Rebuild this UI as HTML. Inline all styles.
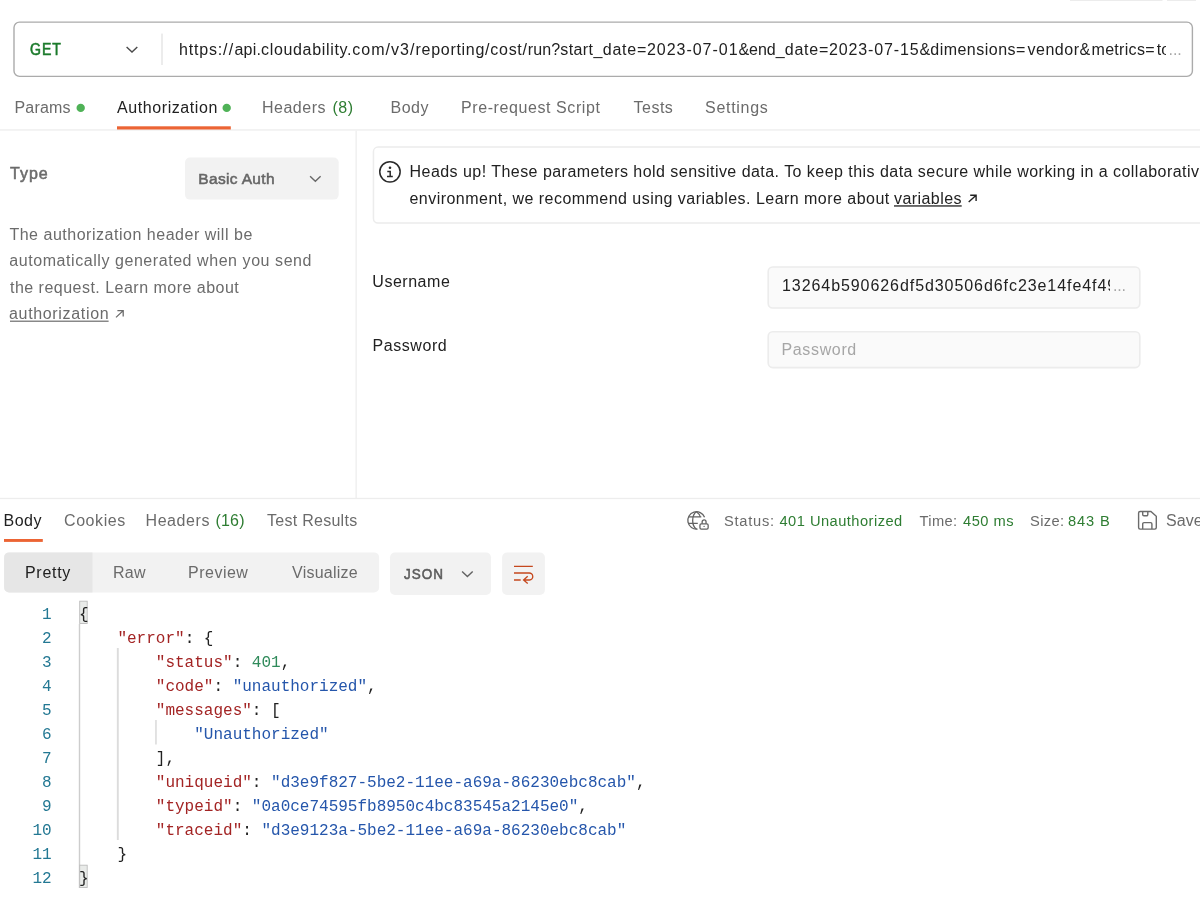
<!DOCTYPE html>
<html><head><meta charset="utf-8"><title>Postman</title>
<style>
html,body{margin:0;padding:0;background:#fff;}
body{will-change:transform;width:1200px;height:909px;position:relative;overflow:hidden;font-family:"Liberation Sans",sans-serif;}
.t{position:absolute;white-space:pre;line-height:24px;font-family:"Liberation Sans",sans-serif;}
.b{position:absolute;box-sizing:border-box;}
.code{position:absolute;left:-1px;top:603px;font-family:"Liberation Mono",monospace;font-size:16px;line-height:24px;white-space:pre;color:#212121;}
.ln{position:absolute;left:0;width:52.6px;text-align:right;color:#237893;}
.cl{position:absolute;left:80px;}
.k{color:#a32424}.s{color:#2556ab}.n{color:#2f8a5a}
svg{position:absolute;overflow:visible}
</style></head><body>
<svg width="1200" height="909" viewBox="0 0 1200 909" style="left:0;top:0">
<!-- top faint bits -->
<rect x="1070" y="0" width="92.5" height="0.8" fill="#e8e8e8"/>
<rect x="1167" y="0" width="29" height="0.8" fill="#e8e8e8"/>
<!-- url bar -->
<rect x="14" y="22.1" width="1178.4" height="54.3" rx="5.5" fill="#fff" stroke="#ababab" stroke-width="1.4"/>
<rect x="161" y="33.6" width="2" height="31.4" fill="#ececec"/>
<path d="M126.6 46.9 L132 52 L137.3 46.9" fill="none" stroke="#4a4a4a" stroke-width="1.4"/>
<!-- tabs -->
<rect x="0" y="129.2" width="1200" height="1.5" fill="#efefef"/>
<rect x="117" y="126.3" width="113.8" height="3.2" fill="#ec6434"/>
<circle cx="80.7" cy="107.9" r="4.2" fill="#4fb257"/>
<circle cx="226.7" cy="107.9" r="4.2" fill="#4fb257"/>
<rect x="355.4" y="130.5" width="1.5" height="367.5" fill="#f0f0f0"/>
<!-- auth type -->
<rect x="185" y="157.6" width="153.7" height="42" rx="5" fill="#f2f2f2"/>
<path d="M310.1 176.2 L315.35 181.2 L320.6 176.2" fill="none" stroke="#686868" stroke-width="1.4"/>
<path d="M117.4 310.6 H123.2 V316.4 M123.2 310.6 L116 317.4" fill="none" stroke="#6b6b6b" stroke-width="1.3"/>
<rect x="10" y="320.6" width="98.6" height="1.2" fill="#6b6b6b"/>
<!-- info box -->
<rect x="373.45" y="147.1" width="840" height="76" rx="4.5" fill="#fff" stroke="#ececec" stroke-width="1.5"/>
<g fill="none" stroke="#2a2a2a" stroke-width="1.5"><circle cx="389.95" cy="171.85" r="10.2"/><path d="M387.3 171.6 H390.2 V176.5 M387 176.5 H392.8"/></g>
<circle cx="390" cy="167.8" r="1.3" fill="#2a2a2a"/>
<path d="M970.2 195.3 H976.1 V201 M976.1 195.3 L968.7 202" fill="none" stroke="#212121" stroke-width="1.4"/>
<rect x="894" y="205.3" width="67.7" height="1.3" fill="#212121"/>
<!-- inputs -->
<rect x="768.2" y="267.05" width="371.6" height="40.95" rx="4.5" fill="#fafafa" stroke="#ececec" stroke-width="1.6"/>
<rect x="768.2" y="331.75" width="371.6" height="35.85" rx="4.5" fill="#fafafa" stroke="#ececec" stroke-width="1.6"/>
<!-- response divider -->
<rect x="0" y="497.8" width="1200" height="1.3" fill="#ededed"/>
<rect x="4" y="539" width="38.8" height="2.9" fill="#ec6434"/>
<!-- view switch -->
<rect x="4.1" y="552.4" width="375" height="40" rx="5" fill="#f2f2f2"/>
<path d="M9.1 552.4 H92.5 V592.4 H9.1 A5 5 0 0 1 4.1 587.4 V557.4 A5 5 0 0 1 9.1 552.4 Z" fill="#e6e6e6"/>
<rect x="390" y="552.6" width="101" height="42.3" rx="5" fill="#f2f2f2"/>
<path d="M462.1 571.4 L467.4 576.5 L472.7 571.4" fill="none" stroke="#626262" stroke-width="1.4"/>
<rect x="502.1" y="552.6" width="42.8" height="42.4" rx="5" fill="#f2f2f2"/>
<path d="M514 566.35 H532.8 M514 573 H529 A3.5 3.5 0 0 1 529.5 580 H524 M527.7 576.2 L523.6 580 L527.7 583.6 M514 580 H520.7" fill="none" stroke="#c5481e" stroke-width="1.35"/>
<!-- status icons -->
<g fill="none" stroke="#636363" stroke-width="1.3"><path d="M704.57 517.14 A8.7 8.7 0 1 0 697.56 529.03"/><path d="M696.5 511.7 C691.4 515 691.4 526 696.5 529.1 M696.5 511.7 C698.7 513.2 700 515 700.4 517.3 M688.6 516.8 H701.3 M688.3 523.4 H697.8"/><rect x="699.95" y="523.85" width="8.2" height="5.3" rx="1.3"/><path d="M702.15 523.8 V521.8 A1.95 1.95 0 0 1 706.05 521.8 V523.8"/></g>
<circle cx="704.1" cy="526.4" r="0.7" fill="#6b6b6b"/>
<g fill="none" stroke="#6b6b6b" stroke-width="1.4"><path d="M1140.1 511.5 H1150.9 L1156.3 516.3 V527.6 A1.5 1.5 0 0 1 1154.8 529.1 H1140.1 A1.5 1.5 0 0 1 1138.6 527.6 V513 A1.5 1.5 0 0 1 1140.1 511.5 Z"/><path d="M1142.7 511.5 V514.6 A1.2 1.2 0 0 0 1143.9 515.8 H1146.6 A1.2 1.2 0 0 0 1147.8 514.6 V511.5 M1142.7 529.1 V523.9 A1.3 1.3 0 0 1 1144 522.6 H1150.6 A1.3 1.3 0 0 1 1151.9 523.9 V529.1"/></g>
<!-- code guides -->
<rect x="78.8" y="624" width="1.4" height="264" fill="#cdcdcd"/>
<rect x="116.85" y="648" width="1.9" height="192" fill="#dcdcdc"/>
<rect x="155.05" y="720" width="1.8" height="24.5" fill="#e0e0e0"/>
<rect x="79.7" y="601.2" width="7.5" height="22.3" fill="#e9ebe9" stroke="#bcbcbc" stroke-width="0.9"/>
<rect x="79.7" y="865.2" width="7.5" height="22.3" fill="#e9ebe9" stroke="#bcbcbc" stroke-width="0.9"/>
</svg>
<span class="t" style="left:30.00px;top:38.00px;font-size:16px;letter-spacing:1.114px;color:#1b7a2b;transform:scaleX(0.88);transform-origin:0 0;-webkit-text-stroke:0.6px #1b7a2b;">GET</span>
<span class="t" style="left:179.00px;top:38.00px;font-size:16px;letter-spacing:0.810px;color:#212121;">https:</span>
<span class="t" style="left:223.00px;top:38.00px;font-size:16px;letter-spacing:1.305px;color:#212121;">//</span>
<span class="t" style="left:234.50px;top:38.00px;font-size:16px;letter-spacing:0.176px;color:#212121;">api.</span>
<span class="t" style="left:261.00px;top:38.00px;font-size:16px;letter-spacing:0.675px;color:#212121;">cloudability.</span>
<span class="t" style="left:352.20px;top:38.00px;font-size:16px;letter-spacing:1.032px;color:#212121;">com/</span>
<span class="t" style="left:391.00px;top:38.00px;font-size:16px;letter-spacing:1.052px;color:#212121;">v3/</span>
<span class="t" style="left:415.50px;top:38.00px;font-size:16px;letter-spacing:0.716px;color:#212121;">reporting/</span>
<span class="t" style="left:490.25px;top:38.00px;font-size:16px;letter-spacing:0.741px;color:#212121;">cost/</span>
<span class="t" style="left:527.75px;top:38.00px;font-size:16px;letter-spacing:0.117px;color:#212121;">run?</span>
<span class="t" style="left:560.25px;top:38.00px;font-size:16px;letter-spacing:0.414px;color:#212121;">start_</span>
<span class="t" style="left:602.75px;top:38.00px;font-size:16px;letter-spacing:0.753px;color:#212121;">date=</span>
<span class="t" style="left:647.00px;top:38.00px;font-size:16px;letter-spacing:0.966px;color:#212121;">2023-07-01</span>
<span class="t" style="left:738.50px;top:38.00px;font-size:16px;letter-spacing:-0.172px;color:#212121;">&amp;</span>
<span class="t" style="left:749.00px;top:38.00px;font-size:16px;letter-spacing:0.039px;color:#212121;">end_</span>
<span class="t" style="left:784.75px;top:38.00px;font-size:16px;letter-spacing:0.753px;color:#212121;">date=</span>
<span class="t" style="left:829.00px;top:38.00px;font-size:16px;letter-spacing:0.866px;color:#212121;">2023-07-15</span>
<span class="t" style="left:919.50px;top:38.00px;font-size:16px;letter-spacing:0.078px;color:#212121;">&amp;</span>
<span class="t" style="left:930.25px;top:38.00px;font-size:16px;letter-spacing:0.481px;color:#212121;">dimensions</span>
<span class="t" style="left:1016.00px;top:38.00px;font-size:16px;letter-spacing:2.156px;color:#212121;">=</span>
<span class="t" style="left:1027.50px;top:38.00px;font-size:16px;letter-spacing:0.513px;color:#212121;">vendor</span>
<span class="t" style="left:1079.50px;top:38.00px;font-size:16px;letter-spacing:1.328px;color:#212121;">&amp;</span>
<span class="t" style="left:1091.50px;top:38.00px;font-size:16px;letter-spacing:0.312px;color:#212121;">metrics</span>
<span class="t" style="left:1145.25px;top:38.00px;font-size:16px;letter-spacing:2.156px;color:#212121;">=</span>
<span class="t" style="left:1156.75px;top:38.00px;font-size:16px;letter-spacing:0.000px;color:#212121;width:8.75px;overflow:hidden;">total_amortized_cost</span>
<span class="t" style="left:1168.60px;top:38.00px;font-size:16px;letter-spacing:-0.100px;color:#a6a6a6;">...</span>
<span class="t" style="left:14.50px;top:96.00px;font-size:16px;letter-spacing:0.200px;color:#6b6b6b;">Params</span>
<span class="t" style="left:117.00px;top:96.00px;font-size:16px;letter-spacing:0.583px;color:#212121;">Authorization</span>
<span class="t" style="left:262.00px;top:96.00px;font-size:16px;letter-spacing:0.500px;color:#6b6b6b;">Headers</span>
<span class="t" style="left:332.50px;top:96.00px;font-size:16px;letter-spacing:0.500px;color:#2e7d32;">(8)</span>
<span class="t" style="left:390.50px;top:96.00px;font-size:16px;letter-spacing:0.500px;color:#6b6b6b;">Body</span>
<span class="t" style="left:461.00px;top:96.00px;font-size:16px;letter-spacing:0.588px;color:#6b6b6b;">Pre-request Script</span>
<span class="t" style="left:633.50px;top:96.00px;font-size:16px;letter-spacing:0.500px;color:#6b6b6b;">Tests</span>
<span class="t" style="left:705.00px;top:96.00px;font-size:16px;letter-spacing:0.714px;color:#6b6b6b;">Settings</span>
<span class="t" style="left:10.00px;top:162.00px;font-size:16px;letter-spacing:1.000px;color:#6b6b6b;-webkit-text-stroke:0.55px #6b6b6b;">Type</span>
<span class="t" style="left:198.30px;top:167.00px;font-size:15.5px;letter-spacing:0.333px;color:#666;-webkit-text-stroke:0.55px #666;">Basic Auth</span>
<span class="t" style="left:9.40px;top:223.00px;font-size:16px;letter-spacing:0.519px;color:#6b6b6b;">The authorization header will be</span>
<span class="t" style="left:9.30px;top:249.00px;font-size:16px;letter-spacing:0.561px;color:#6b6b6b;">automatically generated when you send</span>
<span class="t" style="left:10.00px;top:276.00px;font-size:16px;letter-spacing:0.482px;color:#6b6b6b;">the request. Learn more about</span>
<span class="t" style="left:9.00px;top:302.00px;font-size:16px;letter-spacing:0.667px;color:#6b6b6b;">authorization</span>
<span class="t" style="left:409.50px;top:160.00px;font-size:16px;letter-spacing:0.461px;color:#212121;">Heads up! These parameters hold sensitive data. To keep this data secure while working in a collaborative</span>
<span class="t" style="left:409.50px;top:187.00px;font-size:16px;letter-spacing:0.466px;color:#212121;">environment, we recommend using variables. Learn more about</span>
<span class="t" style="left:894.00px;top:187.00px;font-size:16px;letter-spacing:0.438px;color:#212121;">variables</span>
<span class="t" style="left:372.30px;top:270.00px;font-size:16px;letter-spacing:0.529px;color:#212121;">Username</span>
<span class="t" style="left:372.50px;top:334.00px;font-size:16px;letter-spacing:0.571px;color:#212121;">Password</span>
<span class="t" style="left:782.00px;top:274.00px;font-size:16px;letter-spacing:0.929px;color:#212121;width:328.20px;overflow:hidden;">13264b590626df5d30506d6fc23e14fe4f49a1</span>
<span class="t" style="left:1113.00px;top:274.00px;font-size:16px;letter-spacing:-0.200px;color:#a6a6a6;">...</span>
<span class="t" style="left:781.50px;top:337.50px;font-size:16px;letter-spacing:0.643px;color:#a6a6a6;">Password</span>
<span class="t" style="left:3.50px;top:509.00px;font-size:16px;letter-spacing:0.500px;color:#212121;">Body</span>
<span class="t" style="left:64.00px;top:509.00px;font-size:16px;letter-spacing:0.583px;color:#6b6b6b;">Cookies</span>
<span class="t" style="left:145.50px;top:509.00px;font-size:16px;letter-spacing:0.583px;color:#6b6b6b;">Headers</span>
<span class="t" style="left:215.50px;top:509.00px;font-size:16px;letter-spacing:0.167px;color:#2e7d32;">(16)</span>
<span class="t" style="left:267.00px;top:509.00px;font-size:16px;letter-spacing:0.273px;color:#6b6b6b;">Test Results</span>
<span class="t" style="left:724.00px;top:508.50px;font-size:14.67px;letter-spacing:0.750px;color:#6b6b6b;">Status:</span>
<span class="t" style="left:779.50px;top:508.50px;font-size:14.67px;letter-spacing:0.467px;color:#2e7d32;">401 Unauthorized</span>
<span class="t" style="left:919.50px;top:508.50px;font-size:14.67px;letter-spacing:0.375px;color:#6b6b6b;">Time:</span>
<span class="t" style="left:963.00px;top:508.50px;font-size:14.67px;letter-spacing:0.500px;color:#2e7d32;">450 ms</span>
<span class="t" style="left:1030.00px;top:508.50px;font-size:14.67px;letter-spacing:0.375px;color:#6b6b6b;">Size:</span>
<span class="t" style="left:1068.00px;top:508.50px;font-size:14.67px;letter-spacing:0.875px;color:#2e7d32;">843 B</span>
<span class="t" style="left:1166.00px;top:509.00px;font-size:16px;letter-spacing:0.100px;color:#6b6b6b;">Save</span>
<span class="t" style="left:25.00px;top:561.00px;font-size:16px;letter-spacing:0.700px;color:#212121;">Pretty</span>
<span class="t" style="left:113.00px;top:561.00px;font-size:16px;letter-spacing:0.250px;color:#6b6b6b;">Raw</span>
<span class="t" style="left:188.00px;top:561.00px;font-size:16px;letter-spacing:0.500px;color:#6b6b6b;">Preview</span>
<span class="t" style="left:292.00px;top:561.00px;font-size:16px;letter-spacing:0.250px;color:#6b6b6b;">Visualize</span>
<span class="t" style="left:404.00px;top:562.00px;font-size:15px;letter-spacing:1.074px;color:#5c5c5c;transform:scaleX(0.9);transform-origin:0 0;-webkit-text-stroke:0.55px #5c5c5c;">JSON</span>
<div class="code">
<div class="ln" style="top:0px">1</div><div class="cl" style="top:0px">{</div>
<div class="ln" style="top:24px">2</div><div class="cl" style="top:24px">    <span class="k">"error"</span>: {</div>
<div class="ln" style="top:48px">3</div><div class="cl" style="top:48px">        <span class="k">"status"</span>: <span class="n">401</span>,</div>
<div class="ln" style="top:72px">4</div><div class="cl" style="top:72px">        <span class="k">"code"</span>: <span class="s">"unauthorized"</span>,</div>
<div class="ln" style="top:96px">5</div><div class="cl" style="top:96px">        <span class="k">"messages"</span>: [</div>
<div class="ln" style="top:120px">6</div><div class="cl" style="top:120px">            <span class="s">"Unauthorized"</span></div>
<div class="ln" style="top:144px">7</div><div class="cl" style="top:144px">        ],</div>
<div class="ln" style="top:168px">8</div><div class="cl" style="top:168px">        <span class="k">"uniqueid"</span>: <span class="s">"d3e9f827-5be2-11ee-a69a-86230ebc8cab"</span>,</div>
<div class="ln" style="top:192px">9</div><div class="cl" style="top:192px">        <span class="k">"typeid"</span>: <span class="s">"0a0ce74595fb8950c4bc83545a2145e0"</span>,</div>
<div class="ln" style="top:216px">10</div><div class="cl" style="top:216px">        <span class="k">"traceid"</span>: <span class="s">"d3e9123a-5be2-11ee-a69a-86230ebc8cab"</span></div>
<div class="ln" style="top:240px">11</div><div class="cl" style="top:240px">    }</div>
<div class="ln" style="top:264px">12</div><div class="cl" style="top:264px">}</div>
</div>
</body></html>
